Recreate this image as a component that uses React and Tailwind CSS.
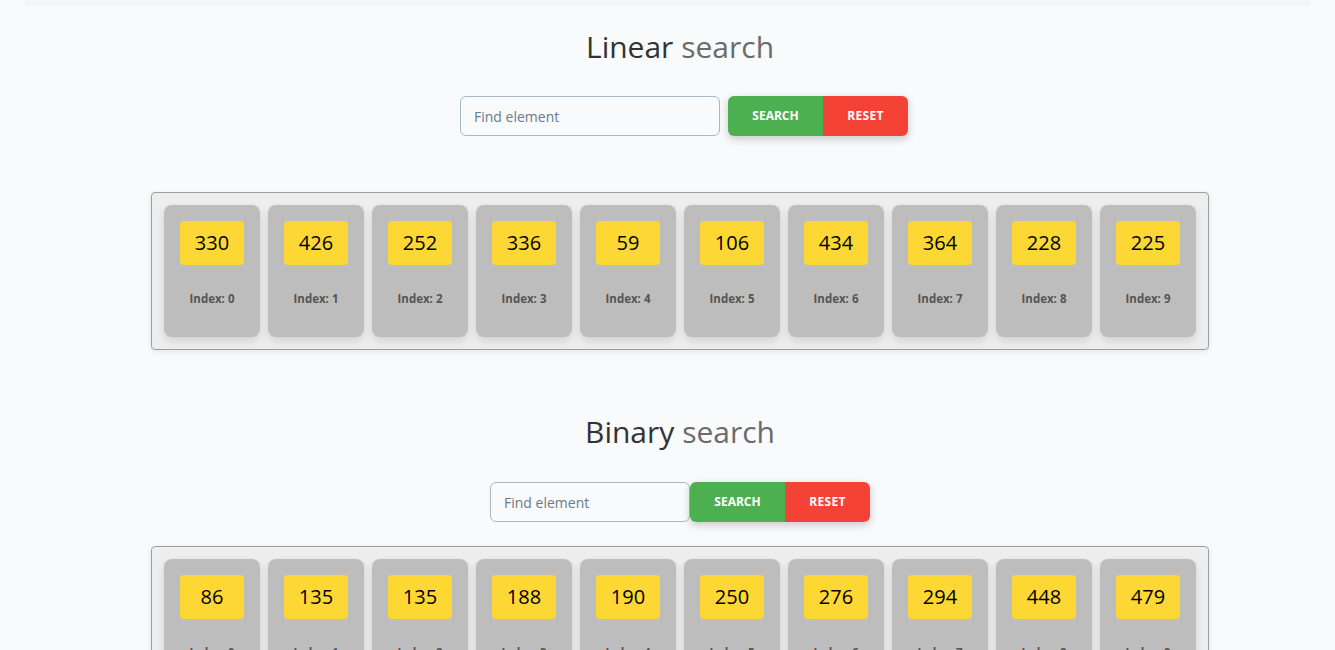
import React from "react";

const linear = [330, 426, 252, 336, 59, 106, 434, 364, 228, 225];
const binary = [86, 135, 135, 188, 190, 250, 276, 294, 448, 479];

function Card({ value, index }) {
  return (
    <div className="w-[96px] h-[132px] shrink-0 rounded-lg bg-[#bdbdbd] shadow-[0_4px_8px_rgba(0,0,0,0.12)] flex flex-col items-center pt-4">
      <div className="w-[64px] h-[44px] rounded bg-[#fdd835] flex items-center justify-center text-[20px] text-black">
        {value}
      </div>
      <div className="mt-[25px] text-[11.5px] font-bold text-[#555]">Index: {index}</div>
    </div>
  );
}

function ArrayBox({ data }) {
  return (
    <div className="w-[1058px] mx-auto border border-[#9e9e9e] rounded bg-[#eeeeee] shadow-[0_2px_6px_rgba(0,0,0,0.08)] p-3 flex gap-2">
      {data.map((v, i) => (
        <Card key={i} value={v} index={i} />
      ))}
    </div>
  );
}

function Title({ first }) {
  return (
    <h1 className="text-center text-[30px] leading-[36px] font-normal">
      <span className="text-[#333]">{first}</span>{" "}
      <span className="text-[#6b6b6b]">search</span>
    </h1>
  );
}

function Controls({ inputW, gap }) {
  return (
    <div className={`flex justify-center ${gap ? "gap-2" : ""}`}>
      <input
        placeholder="Find element"
        className={`${inputW} h-[40px] rounded-md border border-[#a9b8c6] bg-[#f8fafc] px-[13px] text-[14px] text-[#333] placeholder:text-[#6b7b8a] outline-none`}
      />
      <div className="flex rounded-md shadow-[0_3px_8px_rgba(0,0,0,0.2)] overflow-hidden">
        <button className="w-[95px] h-[40px] bg-[#4caf50] text-white text-[12px] font-bold uppercase">Search</button>
        <button className="w-[85px] h-[40px] bg-[#f44336] text-white text-[12px] font-bold uppercase tracking-[0.03em]">Reset</button>
      </div>
    </div>
  );
}

export default function App() {
  return (
    <div className="min-h-[650px] bg-[#f8fafc] relative" style={{ fontFamily: '"Open Sans", "Noto Sans", sans-serif' }}>
      <div className="h-[3px] mx-[25px] shadow-[0_1px_3px_rgba(0,0,0,0.06)] bg-[#f4f6f8]" />
      <div className="pt-[26px] pl-[25px]">
        <Title first="Linear" />
        <div className="mt-[31px] pl-2">
          <Controls inputW="w-[260px]" gap />
        </div>
        <div className="mt-[56px]">
          <ArrayBox data={linear} />
        </div>
        <div className="mt-[64px]">
          <Title first="Binary" />
        </div>
        <div className="mt-[32px]">
          <Controls inputW="w-[200px]" gap={false} />
        </div>
        <div className="mt-[24px]">
          <ArrayBox data={binary} />
        </div>
      </div>
    </div>
  );
}
